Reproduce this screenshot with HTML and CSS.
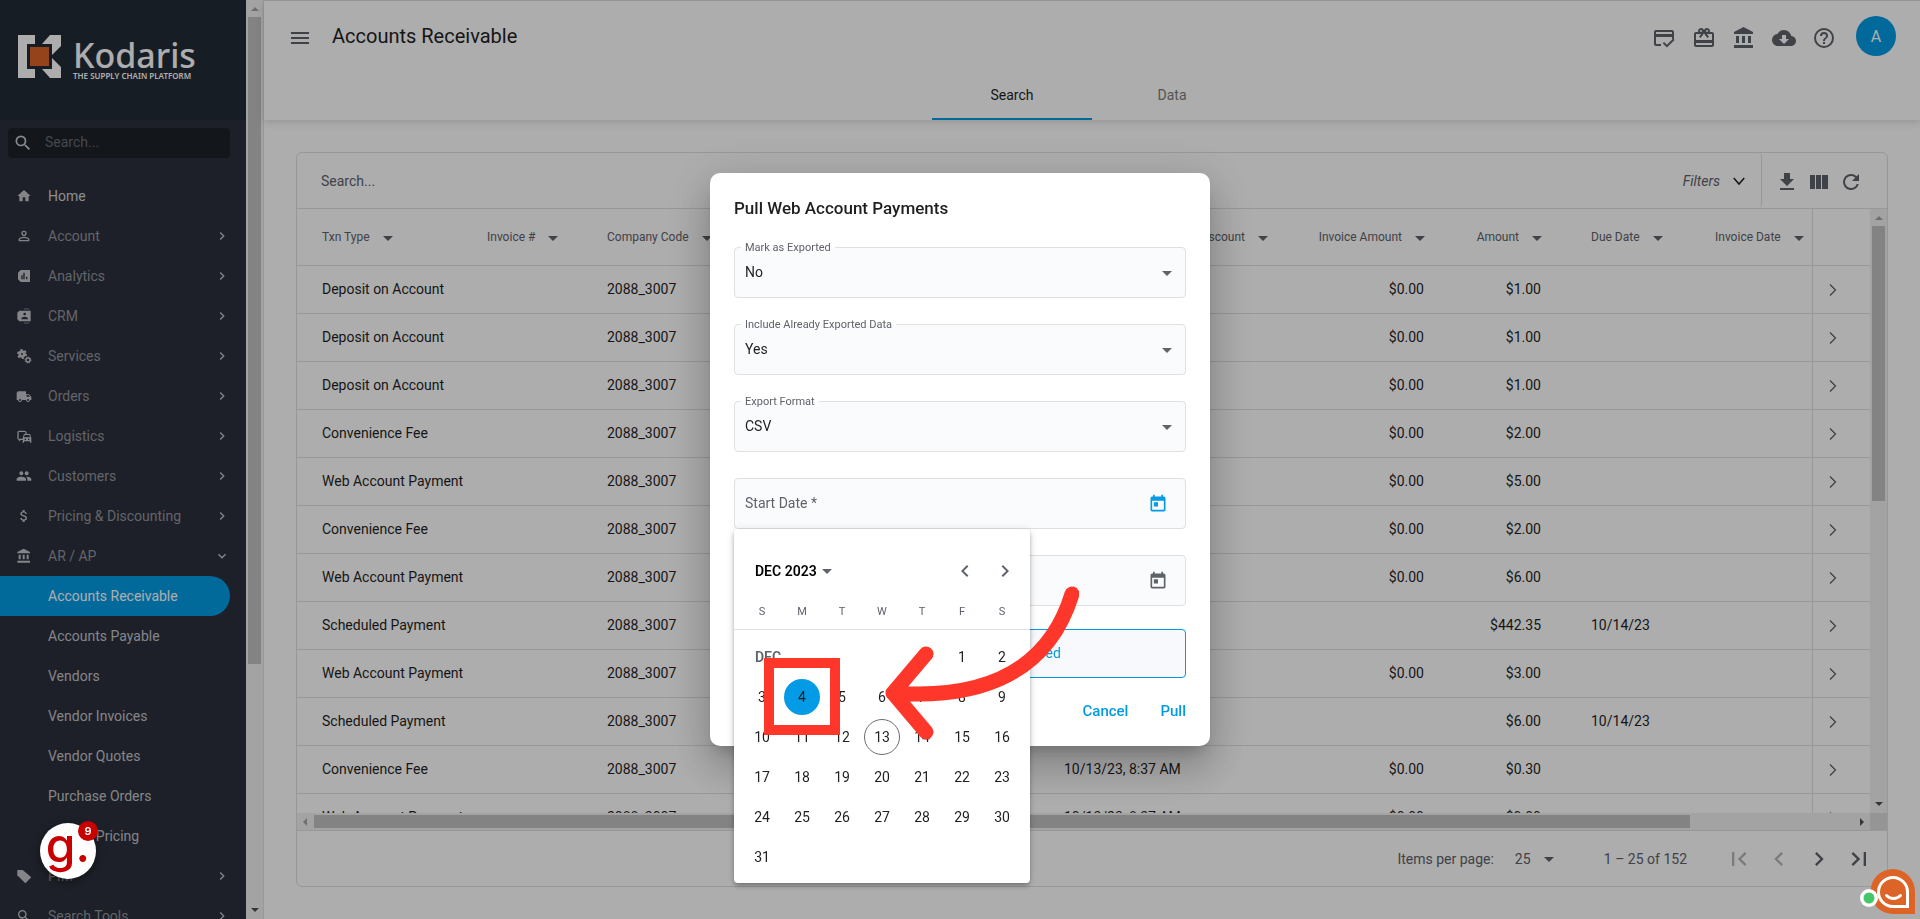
FILE: index.html
```html
<!DOCTYPE html>
<html lang="en">
<head>
    <meta charset="UTF-8">
    <meta name="viewport" content="width=device-width, initial-scale=1.0">
    <title>Accounts Receivable</title>
    <link rel="stylesheet" href="styles.css">
</head>
<body>
    <!-- shared icons -->
    <svg class="sprite" width="0" height="0" aria-hidden="true">
        <symbol id="chev-right" viewBox="0 0 24 24"><path d="M10 6 8.600 7.400 13.200 12l-4.600 4.600L10 18l6-6z"/></symbol>
        <symbol id="chev-left" viewBox="0 0 24 24"><path d="M15.400 7.400 14 6l-6 6 6 6 1.400-1.400L10.800 12z"/></symbol>
        <symbol id="chev-down" viewBox="0 0 24 24"><path d="M16.600 8.600 12 13.200 7.400 8.600 6 10l6 6 6-6z"/></symbol>
        <symbol id="thin-right" viewBox="0 0 24 24"><path d="M9 6.500 14.500 12 9 17.500" fill="none" stroke="currentColor" stroke-width="1.300"/></symbol>
        <symbol id="caret" viewBox="0 0 24 24"><path d="M7 10l5 5 5-5z"/></symbol>
        <symbol id="search" viewBox="0 0 24 24"><path d="M15.500 14h-.79l-.28-.27A6.470 6.470 0 0 0 16 9.500 6.500 6.500 0 1 0 9.500 16c1.610 0 3.090-.59 4.230-1.570l.27.28v.79l5 4.990L20.490 19l-4.990-5zm-6 0C7.010 14 5 11.990 5 9.500S7.010 5 9.500 5 14 7.010 14 9.500 11.990 14 9.500 14z"/></symbol>
        <symbol id="bank" viewBox="0 0 24 24"><path d="M4 10v7h3v-7H4zm6 0v7h3v-7h-3zM2 22h19v-3H2v3zm14-12v7h3v-7h-3zM11.500 1 2 6v2h19V6l-9.500-5z"/></symbol>
        <symbol id="today" viewBox="0 0 24 24"><path d="M19 3h-1V1h-2v2H8V1H6v2H5c-1.110 0-1.990.9-1.990 2L3 19c0 1.100.89 2 2 2h14c1.100 0 2-.9 2-2V5c0-1.100-.9-2-2-2zm0 16H5V8h14v11zM7 10h5v5H7z"/></symbol>
    </svg>

    <div class="app">
        <aside class="sidebar">
            <div class="brand">
                <svg class="brand-mark" viewBox="0 0 43 43" width="43" height="43">
                    <path d="M0 0h17v9H9v25h8v9H0z" fill="#fff"/>
                    <path d="M24 9 32 0h11v11l-9 9v-11zM24 34h10V23l9 9v11H32z" fill="#fff"/>
                    <path d="M12 12h19v19H12z" fill="#dc6428"/>
                </svg>
                <div class="brand-text">
                    <span class="brand-name">Kodaris</span>
                    <span class="brand-tag">THE SUPPLY CHAIN PLATFORM</span>
                </div>
            </div>
            <label class="side-search">
                <svg><use href="#search"/></svg>
                <input type="text" placeholder="Search..." aria-label="Search menu">
            </label>
            <nav class="menu">
                <a href="#" class="home"><svg class="ico" viewBox="0 0 24 24"><path d="M10 20v-6h4v6h5v-8h3L12 3 2 12h3v8z"/></svg>Home</a>
                <a href="#"><svg class="ico" viewBox="0 0 24 24"><path d="M12 5.900a2.100 2.100 0 1 1 0 4.200 2.100 2.100 0 0 1 0-4.200m0 9c2.970 0 6.100 1.460 6.100 2.100v1.100H5.900V17c0-.64 3.130-2.100 6.100-2.100M12 4a4 4 0 1 0 0 8 4 4 0 0 0 0-8zm0 9c-2.670 0-8 1.340-8 4v3h16v-3c0-2.660-5.330-4-8-4z"/></svg>Account<svg class="arrow"><use href="#chev-right"/></svg></a>
                <a href="#"><svg class="ico" viewBox="0 0 24 24"><path fill-rule="evenodd" d="M7 3h14v18H7l-4-4V7zM8 11v6h2v-6zm3-4v10h2V7zm4 6v4h2v-4z"/></svg>Analytics<svg class="arrow"><use href="#chev-right"/></svg></a>
                <a href="#"><svg class="ico" viewBox="0 0 24 24"><path fill-rule="evenodd" d="M12 1h8v1h-8zM12 22h8v1h-8zM5 4h17v16H5l-3-3V7zm8 3a2 2 0 1 0 0 4 2 2 0 0 0 0-4zm-5 9v1h10v-1c0-2-3-3-5-3s-5 1-5 3z"/></svg>CRM<svg class="arrow"><use href="#chev-right"/></svg></a>
                <a href="#"><svg class="ico" viewBox="0 0 24 24"><g fill="none" stroke="currentColor"><circle cx="9" cy="9" r="3.500" stroke-width="4"/><circle cx="9" cy="9" r="6" stroke-width="3" stroke-dasharray="3.100 3.180"/><circle cx="18" cy="18" r="3" stroke-width="2"/><circle cx="18" cy="18" r="4.500" stroke-width="1.500" stroke-dasharray="1.800 1.730"/></g></svg>Services<svg class="arrow"><use href="#chev-right"/></svg></a>
                <a href="#"><svg class="ico" viewBox="0 0 24 24"><path fill-rule="evenodd" d="M3 5h12v4h4l4 4v5h-2a3 3 0 0 1-6 0H9a3 3 0 0 1-6 0H1V7zm13 5v3h5l-2.500-3zM6 16.500a1.500 1.500 0 1 0 0 3 1.500 1.500 0 0 0 0-3zm12 0a1.500 1.500 0 1 0 0 3 1.500 1.500 0 0 0 0-3z"/></svg>Orders<svg class="arrow"><use href="#chev-right"/></svg></a>
                <a href="#"><svg class="ico" viewBox="0 0 24 24"><path d="M12 4H5C3.340 4 2 5.340 2 7v8c0 1.660 1.340 3 3 3l-1 1v1h1l2-2h4v-2H4V6h10v3h2V7c0-1.660-1.340-3-4-3z"/><path fill-rule="evenodd" d="M12 9h9l2 6v7h-2v-2h-9v2h-2v-7zm1 1.500L12 14h9l-1-3.500zM13 16v2h2v-2zm5 0v2h2v-2z"/></svg>Logistics<svg class="arrow"><use href="#chev-right"/></svg></a>
                <a href="#"><svg class="ico" viewBox="0 0 24 24"><path d="M16 11a3 3 0 1 0 0-6 3 3 0 0 0 0 6zm-8 0a3 3 0 1 0 0-6 3 3 0 0 0 0 6zm0 2c-2.330 0-7 1.170-7 3.500V19h14v-2.500C15 14.170 10.330 13 8 13zm8 0-.97.050c1.160.84 1.970 1.970 1.970 3.450V19h6v-2.500c0-2.330-4.670-3.500-7-3.500z"/></svg>Customers<svg class="arrow"><use href="#chev-right"/></svg></a>
                <a href="#"><svg class="ico" viewBox="0 0 24 24"><path d="M11.800 10.900c-2.270-.59-3-1.200-3-2.150 0-1.090 1.010-1.850 2.700-1.850 1.780 0 2.440.85 2.500 2.100h2.210c-.07-1.720-1.120-3.300-3.210-3.810V3h-3v2.160c-1.940.42-3.500 1.680-3.500 3.610 0 2.310 1.910 3.460 4.700 4.130 2.500.6 3 1.480 3 2.410 0 .69-.49 1.790-2.700 1.790-2.060 0-2.870-.92-2.980-2.100h-2.200c.12 2.190 1.760 3.420 3.680 3.830V21h3v-2.150c1.950-.37 3.500-1.500 3.500-3.550 0-2.840-2.430-3.810-4.700-4.400z"/></svg>Pricing &amp; Discounting<svg class="arrow"><use href="#chev-right"/></svg></a>
                <a href="#"><svg class="ico"><use href="#bank"/></svg>AR / AP<svg class="arrow"><use href="#chev-down"/></svg></a>
                <a href="#" class="sub active">Accounts Receivable</a>
                <a href="#" class="sub">Accounts Payable</a>
                <a href="#" class="sub">Vendors</a>
                <a href="#" class="sub">Vendor Invoices</a>
                <a href="#" class="sub">Vendor Quotes</a>
                <a href="#" class="sub">Purchase Orders</a>
                <a href="#" class="sub">Vendor Pricing</a>
                <a href="#"><svg class="ico" viewBox="0 0 24 24"><path d="M2 3h8l13 11-9 9L2 11z"/></svg>PIM<svg class="arrow"><use href="#chev-right"/></svg></a>
                <a href="#"><svg class="ico"><use href="#search"/></svg>Search Tools<svg class="arrow"><use href="#chev-right"/></svg></a>
            </nav>
        </aside>
        <div class="scroll-v side-scroll">
            <i class="tri up off"></i>
            <div class="thumb"></div>
            <i class="tri down"></i>
        </div>

        <div class="page">
            <header class="topbar">
                <div class="top-row">
                    <button class="icon-btn" aria-label="Menu"><svg viewBox="0 0 24 24"><path d="M3 18h18v-2H3v2zm0-5h18v-2H3v2zm0-7v2h18V6H3z"/></svg></button>
                    <h1>Accounts Receivable</h1>
                    <div class="top-icons">
                        <button class="icon-btn" aria-label="Payments"><svg viewBox="0 0 24 24"><path fill-rule="evenodd" d="M4 4h16c1.100 0 2 .9 2 2v7h-2v-2H4v7h5v2H4c-1.100 0-2-.9-2-2V6c0-1.100.9-2 2-2zm0 2v2h16V6z"/><path d="m14.900 21.500-4.200-4.200 1.400-1.400 2.800 2.800 6.300-6.200 1.400 1.400z"/></svg></button>
                        <button class="icon-btn" aria-label="Gift cards"><svg viewBox="0 0 24 24"><path d="M20 6h-2.180c.11-.31.180-.65.180-1a3 3 0 0 0-5.500-1.650l-.5.670-.5-.68A3 3 0 0 0 6 5c0 .35.070.69.180 1H4c-1.110 0-1.990.89-1.990 2L2 19c0 1.110.89 2 2 2h16c1.110 0 2-.89 2-2V8c0-1.110-.89-2-2-2zm-5-2a1 1 0 1 1 0 2 1 1 0 0 1 0-2zM9 4a1 1 0 1 1 0 2 1 1 0 0 1 0-2zm11 15H4v-2h16v2zm0-5H4V8h5.080L7 10.830 8.620 12 12 7.400l3.380 4.600L17 10.830 14.920 8H20v6z"/></svg></button>
                        <button class="icon-btn" aria-label="Bank"><svg><use href="#bank"/></svg></button>
                        <button class="icon-btn" aria-label="Downloads"><svg viewBox="0 0 24 24"><path d="M19.350 10.040A7.490 7.490 0 0 0 12 4C9.110 4 6.600 5.640 5.350 8.040A5.994 5.994 0 0 0 0 14c0 3.310 2.690 6 6 6h13c2.760 0 5-2.240 5-5 0-2.640-2.050-4.780-4.650-4.960zM17 13l-5 5-5-5h3V9h4v4h3z"/></svg></button>
                        <button class="icon-btn" aria-label="Help"><svg viewBox="0 0 24 24"><path d="M11 18h2v-2h-2v2zm1-16a10 10 0 1 0 0 20 10 10 0 0 0 0-20zm0 18a8 8 0 1 1 0-16 8 8 0 0 1 0 16zm0-14a4 4 0 0 0-4 4h2a2 2 0 1 1 4 0c0 2-3 1.750-3 5h2c0-2.250 3-2.500 3-5a4 4 0 0 0-4-4z"/></svg></button>
                        <button class="avatar">A</button>
                    </div>
                </div>
                <nav class="tabs">
                    <a href="#" class="tab selected">Search</a>
                    <a href="#" class="tab">Data</a>
                </nav>
            </header>

            <main class="card">
                <div class="toolbar">
                    <input type="text" placeholder="Search..." aria-label="Search transactions">
                    <button class="filters">Filters <svg viewBox="0 0 24 24"><path d="M5 8l7 8 7-8" fill="none" stroke="#1e1e1e" stroke-width="2"/></svg></button>
                    <div class="tools">
                        <button aria-label="Download"><svg viewBox="0 0 24 24"><path d="M19 9h-4V3H9v6H5l7 7 7-7zM5 18v2h14v-2H5z"/></svg></button>
                        <button aria-label="Columns"><svg viewBox="0 0 24 24"><path d="M3 5h5v14H3zM9 5h5v14H9zM15 5h6v14h-6z"/></svg></button>
                        <button aria-label="Refresh"><svg viewBox="0 0 24 24"><path d="M17.650 6.350A7.958 7.958 0 0 0 12 4a8 8 0 1 0 7.730 10h-2.080A5.990 5.990 0 0 1 12 18a6 6 0 1 1 0-12c1.660 0 3.140.69 4.220 1.780L13 11h7V4l-2.350 2.350z"/></svg></button>
                    </div>
                </div>
                <div class="grid">
                    <div class="grid-body">
                        <table>
                            <colgroup>
                                <col class="w-type"><col class="w-inv"><col><col class="w-date"><col class="w-disc"><col class="w-invamt"><col class="w-amt"><col class="w-due"><col class="w-invdate"><col class="w-act">
                            </colgroup>
                            <thead>
                                <tr>
                                    <th>Txn Type<svg><use href="#caret"/></svg></th>
                                    <th>Invoice #<svg><use href="#caret"/></svg></th>
                                    <th>Company Code<svg><use href="#caret"/></svg></th>
                                    <th></th>
                                    <th class="num">Discount<svg><use href="#caret"/></svg></th>
                                    <th class="num">Invoice Amount<svg><use href="#caret"/></svg></th>
                                    <th class="num">Amount<svg><use href="#caret"/></svg></th>
                                    <th>Due Date<svg><use href="#caret"/></svg></th>
                                    <th>Invoice Date<svg><use href="#caret"/></svg></th>
                                    <th class="act"></th>
                                </tr>
                            </thead>
                            <tbody>
                                <tr><td>Deposit on Account</td><td></td><td>2088_3007</td><td></td><td></td><td class="num">$0.00</td><td class="num">$1.00</td><td></td><td></td><td class="act"><svg><use href="#thin-right"/></svg></td></tr>
                                <tr><td>Deposit on Account</td><td></td><td>2088_3007</td><td></td><td></td><td class="num">$0.00</td><td class="num">$1.00</td><td></td><td></td><td class="act"><svg><use href="#thin-right"/></svg></td></tr>
                                <tr><td>Deposit on Account</td><td></td><td>2088_3007</td><td></td><td></td><td class="num">$0.00</td><td class="num">$1.00</td><td></td><td></td><td class="act"><svg><use href="#thin-right"/></svg></td></tr>
                                <tr><td>Convenience Fee</td><td></td><td>2088_3007</td><td></td><td></td><td class="num">$0.00</td><td class="num">$2.00</td><td></td><td></td><td class="act"><svg><use href="#thin-right"/></svg></td></tr>
                                <tr><td>Web Account Payment</td><td></td><td>2088_3007</td><td></td><td></td><td class="num">$0.00</td><td class="num">$5.00</td><td></td><td></td><td class="act"><svg><use href="#thin-right"/></svg></td></tr>
                                <tr><td>Convenience Fee</td><td></td><td>2088_3007</td><td></td><td></td><td class="num">$0.00</td><td class="num">$2.00</td><td></td><td></td><td class="act"><svg><use href="#thin-right"/></svg></td></tr>
                                <tr><td>Web Account Payment</td><td></td><td>2088_3007</td><td></td><td></td><td class="num">$0.00</td><td class="num">$6.00</td><td></td><td></td><td class="act"><svg><use href="#thin-right"/></svg></td></tr>
                                <tr><td>Scheduled Payment</td><td></td><td>2088_3007</td><td></td><td></td><td></td><td class="num">$442.35</td><td>10/14/23</td><td></td><td class="act"><svg><use href="#thin-right"/></svg></td></tr>
                                <tr><td>Web Account Payment</td><td></td><td>2088_3007</td><td></td><td></td><td class="num">$0.00</td><td class="num">$3.00</td><td></td><td></td><td class="act"><svg><use href="#thin-right"/></svg></td></tr>
                                <tr><td>Scheduled Payment</td><td></td><td>2088_3007</td><td></td><td></td><td></td><td class="num">$6.00</td><td>10/14/23</td><td></td><td class="act"><svg><use href="#thin-right"/></svg></td></tr>
                                <tr><td>Convenience Fee</td><td></td><td>2088_3007</td><td>10/13/23, 8:37 AM</td><td></td><td class="num">$0.00</td><td class="num">$0.30</td><td></td><td></td><td class="act"><svg><use href="#thin-right"/></svg></td></tr>
                                <tr><td>Web Account Payment</td><td></td><td>2088_3007</td><td>10/13/23, 8:37 AM</td><td></td><td class="num">$0.00</td><td class="num">$9.00</td><td></td><td></td><td class="act"><svg><use href="#thin-right"/></svg></td></tr>
                            </tbody>
                        </table>
                    </div>
                    <div class="scroll-v grid-scroll">
                        <i class="tri up off"></i>
                        <div class="thumb"></div>
                        <i class="tri down"></i>
                    </div>
                    <div class="scroll-h">
                        <i class="tri left off"></i>
                        <div class="thumb"></div>
                        <i class="tri right"></i>
                    </div>
                    <div class="corner"></div>
                </div>
                <footer class="pager">
                    <label for="page-size">Items per page:</label>
                    <span class="size-select"><select id="page-size"><option>25</option></select><svg><use href="#caret"/></svg></span>
                    <span class="range">1 – 25 of 152</span>
                    <div class="pager-btns">
                        <button disabled aria-label="First page"><svg viewBox="0 0 24 24"><path d="M18.410 16.590 13.820 12l4.590-4.590L17 6l-6 6 6 6zM6 6h2v12H6z"/></svg></button>
                        <button disabled aria-label="Previous page"><svg><use href="#chev-left"/></svg></button>
                        <button aria-label="Next page"><svg><use href="#chev-right"/></svg></button>
                        <button aria-label="Last page"><svg viewBox="0 0 24 24"><path d="M5.590 7.410 10.180 12l-4.590 4.590L7 18l6-6-6-6zM16 6h2v12h-2z"/></svg></button>
                    </div>
                </footer>
            </main>
        </div>
    </div>

    <div class="backdrop">
        <section class="dialog" role="dialog" aria-labelledby="dialog-title">
            <h2 id="dialog-title">Pull Web Account Payments</h2>
            <div class="field">
                <label for="mark">Mark as Exported</label>
                <select id="mark"><option>No</option></select>
                <svg class="field-caret"><use href="#caret"/></svg>
            </div>
            <div class="field">
                <label for="include">Include Already Exported Data</label>
                <select id="include"><option>Yes</option></select>
                <svg class="field-caret"><use href="#caret"/></svg>
            </div>
            <div class="field">
                <label for="format">Export Format</label>
                <select id="format"><option>CSV</option></select>
                <svg class="field-caret"><use href="#caret"/></svg>
            </div>
            <div class="field date open">
                <input type="text" placeholder="Start Date *" aria-label="Start date">
                <button aria-label="Open calendar"><svg><use href="#today"/></svg></button>

                <div class="picker">
                    <div class="picker-head">
                        <button class="period">DEC 2023<svg><use href="#caret"/></svg></button>
                        <button class="step" aria-label="Previous month"><svg><use href="#chev-left"/></svg></button>
                        <button class="step" aria-label="Next month"><svg><use href="#chev-right"/></svg></button>
                    </div>
                    <table class="days">
                        <colgroup>
                            <col class="edge"><col span="5"><col class="edge">
                        </colgroup>
                        <thead>
                            <tr><th>S</th><th>M</th><th>T</th><th>W</th><th>T</th><th>F</th><th>S</th></tr>
                        </thead>
                        <tbody>
                            <tr><td colspan="5" class="month">DEC</td><td><button>1</button></td><td><button>2</button></td></tr>
                            <tr><td><button>3</button></td><td><button class="picked">4</button></td><td><button>5</button></td><td><button>6</button></td><td><button>7</button></td><td><button>8</button></td><td><button>9</button></td></tr>
                            <tr><td><button>10</button></td><td><button>11</button></td><td><button>12</button></td><td><button class="now">13</button></td><td><button>14</button></td><td><button>15</button></td><td><button>16</button></td></tr>
                            <tr><td><button>17</button></td><td><button>18</button></td><td><button>19</button></td><td><button>20</button></td><td><button>21</button></td><td><button>22</button></td><td><button>23</button></td></tr>
                            <tr><td><button>24</button></td><td><button>25</button></td><td><button>26</button></td><td><button>27</button></td><td><button>28</button></td><td><button>29</button></td><td><button>30</button></td></tr>
                            <tr><td><button>31</button></td><td colspan="6"></td></tr>
                        </tbody>
                    </table>
                    <div class="highlight"></div>
                    <svg class="pointer" viewBox="0 0 200 160" width="200" height="160">
                        <path d="M193 12C170 88 106 118 14 111M47 72 14 111 47 150" fill="none" stroke="#ff372a" stroke-width="15" stroke-linecap="round" stroke-linejoin="round"/>
                    </svg>
                </div>
            </div>
            <div class="field date">
                <input type="text" aria-label="End date">
                <button aria-label="Open calendar"><svg><use href="#today"/></svg></button>
            </div>
            <button class="notice">Date range required</button>
            <div class="actions">
                <button>Cancel</button>
                <button>Pull</button>
            </div>
        </section>
    </div>

    <button class="guide" aria-label="Guides">g.<span class="count">9</span></button>

    <button class="chat" aria-label="Chat">
        <svg viewBox="0 0 56 46" width="56" height="46">
            <path d="M33 0a22.500 22.500 0 0 0 0 45h22V22.500A22.500 22.500 0 0 0 33 0z" fill="#dd6427"/>
            <path d="M33 8.500a14.500 14.500 0 0 0 0 29h14.500V23A14.500 14.500 0 0 0 33 8.500z" fill="none" stroke="#fff" stroke-width="3"/>
            <path d="M26.500 26.500c4 4 10 4 14 0" fill="none" stroke="#fff" stroke-width="3" stroke-linecap="round"/>
            <circle cx="9" cy="29" r="9" fill="#fff"/>
            <circle cx="9" cy="29" r="5.500" fill="#45c869"/>
        </svg>
    </button>
</body>
</html>
```
FILE: styles.css
```css
* {
    box-sizing: border-box;
}

body {
    margin: 0;
    height: 100vh;
    overflow: hidden;
    font-family: Roboto, "Open Sans", sans-serif;
    font-size: 14px;
    color: #1f1f1f;
    background-color: #fff;
}

button, input, select {
    font: inherit;
    color: inherit;
    border: none;
    background: none;
    padding: 0;
    margin: 0;
    outline: none;
}

button {
    cursor: pointer;
}

select {
    appearance: none;
}

a {
    color: inherit;
    text-decoration: none;
}

svg {
    display: block;
    width: 24px;
    height: 24px;
    fill: currentColor;
    flex-shrink: 0;
}

.sprite {
    position: absolute;
    width: 0;
    height: 0;
}

.app {
    display: flex;
    height: 100vh;
}

/* sidebar */
.sidebar {
    width: 246px;
    flex-shrink: 0;
    overflow: hidden;
    background-color: #2c303b;
}

.brand {
    display: flex;
    align-items: center;
    gap: 12px;
    height: 120px;
    padding: 0 18px 8px;
    background-color: #232b36;
    color: #fff;
}

.brand-mark {
    width: 43px;
    height: 43px;
}

.brand-text {
    display: flex;
    flex-direction: column;
    margin-top: 5px;
    font-family: "Noto Sans", sans-serif;
}

.brand-name {
    font-size: 34px;
    line-height: 34px;
    font-weight: 500;
}

.brand-tag {
    font-size: 8px;
    line-height: 8px;
    font-weight: 600;
    white-space: nowrap;
}

.side-search {
    display: flex;
    align-items: center;
    height: 30px;
    margin: 8px 16px 18px 8px;
    padding-left: 5px;
    border-radius: 4px;
    background-color: #1d2128;
    color: #c9cbd0;
}

.side-search svg {
    width: 20px;
    height: 20px;
}

.side-search input {
    flex: 1;
    min-width: 0;
    padding: 0 0 2px 12px;
}

.side-search input::placeholder {
    color: #666b73;
    opacity: 1;
}

.menu a {
    display: flex;
    align-items: center;
    height: 40px;
    padding: 0 16px;
    color: #92959b;
}

.menu .home {
    color: #cfd1d5;
}

.menu .ico {
    width: 16px;
    height: 16px;
    margin-right: 16px;
    color: #c3c5ca;
}

.menu .arrow {
    width: 16px;
    height: 16px;
    margin-left: auto;
    color: #c3c5ca;
}

.menu .sub {
    padding-left: 48px;
    color: #c3c5ca;
}

.menu .active {
    margin-right: 16px;
    border-radius: 0 20px 20px 0;
    background-color: #039be5;
    color: #fff;
}

/* scrollbars */
.scroll-v {
    display: flex;
    flex-direction: column;
    align-items: center;
    width: 17px;
    flex-shrink: 0;
    background-color: #f1f1f1;
}

.scroll-v .thumb {
    width: 13px;
    background-color: #c1c1c1;
}

.scroll-h {
    display: flex;
    align-items: center;
    height: 17px;
    background-color: #f1f1f1;
}

.scroll-h .thumb {
    width: 87.5%;
    height: 13px;
    background-color: #c1c1c1;
}

.side-scroll .thumb {
    height: 70.4%;
}

.grid-scroll .thumb {
    height: 45.5%;
}

.tri {
    border: 4px solid transparent;
}

.up {
    border-top-width: 0;
    border-bottom-color: #505050;
    margin: 7px 0 6px;
}

.down {
    border-bottom-width: 0;
    border-top-color: #505050;
    margin: auto 0 7px;
}

.left {
    border-left-width: 0;
    border-right-color: #505050;
    margin: 0 7px 0 6px;
}

.right {
    border-right-width: 0;
    border-left-color: #505050;
    margin: 0 6px 0 auto;
}

.up.off {
    border-bottom-color: #a3a3a3;
}

.left.off {
    border-right-color: #a3a3a3;
}

/* page */
.page {
    display: flex;
    flex-direction: column;
    flex: 1;
    min-width: 0;
    border-left: 1px solid #e0e0e0;
    border-top: 1px solid #e4e4e4;
}

.topbar {
    display: flex;
    flex-direction: column;
    justify-content: space-between;
    height: 119px;
    box-shadow: 0 2px 8px rgba(0, 0, 0, 0.15);
}

.top-row {
    display: flex;
    align-items: center;
    height: 70px;
    padding: 0 24px;
}

.icon-btn {
    color: #5e6269;
    padding-top: 4px;
}

.top-row h1 {
    margin: 0 0 0 20px;
    font-size: 20px;
    font-weight: 400;
}

.top-icons {
    display: flex;
    align-items: center;
    gap: 16px;
    margin-left: auto;
}

.avatar {
    width: 40px;
    height: 40px;
    margin-left: 4px;
    border-radius: 50%;
    background-color: #039be5;
    color: #fff;
    font-size: 16px;
}

.tabs {
    display: flex;
    justify-content: center;
}

.tab {
    width: 160px;
    padding-bottom: 14px;
    border-bottom: 2px solid transparent;
    line-height: 18px;
    text-align: center;
    color: #7c7c7c;
}

.tab.selected {
    color: #1f1f1f;
    border-bottom-color: #039be5;
}

.card {
    display: flex;
    flex-direction: column;
    flex: 1;
    min-height: 0;
    margin: 32px;
    border: 1px solid #e0e0e0;
    border-radius: 6px;
}

.toolbar {
    display: flex;
    align-items: center;
    height: 56px;
    padding-left: 24px;
    border-bottom: 1px solid #e0e0e0;
    color: #5e6269;
}

.toolbar input {
    flex: 1;
}

.toolbar input::placeholder {
    color: #5e6269;
    opacity: 1;
}

.filters {
    display: flex;
    align-items: center;
    gap: 10px;
    height: 100%;
    padding-right: 13px;
    border-right: 1px solid #e0e0e0;
    border-radius: 0 4px 4px 0;
    font-style: italic;
}

.filters svg {
    width: 18px;
    height: 18px;
}

.tools {
    display: flex;
    gap: 8px;
    padding: 2px 24px 0 13px;
}

/* table */
.grid {
    display: grid;
    grid-template-columns: 1fr 17px;
    grid-template-rows: 1fr 17px;
    flex: 1;
    min-height: 0;
}

.grid-body {
    min-height: 0;
    overflow: hidden;
}

.corner {
    background-color: #dcdcdc;
}

.grid table {
    width: 100%;
    table-layout: fixed;
    border-collapse: separate;
    border-spacing: 0;
}

.w-type { width: 181px; }
.w-inv { width: 120px; }
.w-date { width: 132px; }
.w-disc { width: 121px; }
.w-invamt { width: 157px; }
.w-amt { width: 117px; }
.w-due { width: 124px; }
.w-invdate { width: 106px; }
.w-act { width: 58px; }

.grid th,
.grid td {
    height: 48px;
    padding: 0 41px 2px 9px;
    border-bottom: 1px solid #e0e0e0;
    text-align: left;
    white-space: nowrap;
}

.grid th {
    height: 57px;
    padding: 2px 0 0 9px;
    font-size: 12px;
    font-weight: 400;
    color: #5e6269;
}

.grid th:first-child,
.grid td:first-child {
    padding-left: 25px;
    padding-right: 0;
}

.grid td:nth-child(4) {
    padding-right: 0;
}

.grid th svg {
    display: inline-block;
    vertical-align: middle;
    margin-left: 6px;
}

.grid .num {
    text-align: right;
}

.grid th.num {
    padding: 2px 33px 0 0;
}

.grid th.act,
.grid td.act {
    padding: 0 0 0 8px;
    border-left: 1px solid #e0e0e0;
    color: #5e6269;
}

/* paginator */
.pager {
    display: flex;
    align-items: center;
    justify-content: flex-end;
    height: 56px;
    padding-right: 8px;
    border-top: 1px solid #e0e0e0;
    color: #5e6269;
}

.size-select {
    display: flex;
    align-items: center;
    margin: 0 43px 0 21px;
}

.size-select select {
    width: 22px;
}

.range {
    margin-right: 32px;
}

.pager-btns {
    display: flex;
}

.pager-btns button {
    display: flex;
    align-items: center;
    justify-content: center;
    width: 40px;
    height: 40px;
}

.pager-btns button:disabled {
    color: #b5b6b9;
}

.pager-btns svg {
    width: 28px;
    height: 28px;
}

/* dialog */
.backdrop {
    position: fixed;
    inset: 0;
    display: flex;
    align-items: center;
    justify-content: center;
    background-color: rgba(0, 0, 0, 0.32);
}

.dialog {
    width: 500px;
    padding: 24px 24px 26px;
    border-radius: 10px;
    background-color: #fff;
    box-shadow: 0 11px 15px -7px rgba(0, 0, 0, 0.2), 0 24px 38px 3px rgba(0, 0, 0, 0.14), 0 9px 46px 8px rgba(0, 0, 0, 0.12);
}

.dialog h2 {
    margin: 0 0 28px;
    font-size: 17px;
    line-height: 22px;
    font-weight: 500;
}

.field {
    position: relative;
    display: flex;
    align-items: center;
    height: 51px;
    margin-bottom: 26px;
    border: 1px solid #e0e0e0;
    border-radius: 4px;
    background-color: #fafbfd;
}

.field label {
    position: absolute;
    top: -6px;
    left: 6px;
    padding: 0 4px;
    font-size: 11px;
    line-height: 12px;
    color: #5e6269;
    background: linear-gradient(#fff 50%, #fafbfd 50%);
}

.field select,
.field input {
    flex: 1;
    min-width: 0;
    height: 48px;
    padding: 0 10px 2px;
}

.field input::placeholder {
    color: #5e6269;
    opacity: 1;
}

.field-caret {
    position: absolute;
    right: 6px;
    color: #5e6269;
    pointer-events: none;
}

.date button {
    color: #5e6269;
}

.date > button {
    margin-right: 17px;
}

.date > button svg {
    width: 20px;
    height: 20px;
}

.open > button {
    color: #039be5;
}

.notice {
    display: block;
    width: 100%;
    height: 49px;
    margin-top: -3px;
    padding: 0 0 2px 204px;
    border: 1px solid #039be5;
    border-radius: 4px;
    text-align: left;
    color: #039be5;
    background-color: #f7f9fc;
}

.actions {
    display: flex;
    justify-content: flex-end;
    gap: 32px;
    margin-top: 24px;
    line-height: 18px;
}

.actions button {
    font-size: 15px;
    font-weight: 500;
    color: #039be5;
}

/* date picker */
.picker {
    position: absolute;
    top: 50px;
    left: -1px;
    z-index: 1;
    width: 296px;
    padding-bottom: 6px;
    border-radius: 4px;
    background-color: #fff;
    box-shadow: 0 2px 4px -1px rgba(0, 0, 0, 0.2), 0 4px 5px rgba(0, 0, 0, 0.14), 0 1px 10px rgba(0, 0, 0, 0.12);
}

.picker-head {
    display: flex;
    align-items: center;
    padding: 22px 5px 6px 21px;
}

.period {
    display: flex;
    align-items: center;
    margin-right: auto;
    font-weight: 600;
}

.picker .period {
    color: #000;
}

.period svg {
    margin-left: -2px;
    color: #5e6269;
}

.step {
    display: flex;
    align-items: center;
    justify-content: center;
    width: 40px;
    height: 40px;
}

.days {
    width: 100%;
    table-layout: fixed;
    border-collapse: separate;
    border-spacing: 0;
}

.days .edge {
    width: 48px;
}

.days th {
    height: 33px;
    padding: 0 0 4px;
    border-bottom: 1px solid #e0e0e0;
    font-size: 11px;
    font-weight: 400;
    color: #5e6269;
}

.days td {
    height: 40px;
    padding: 0;
    text-align: center;
}

.days th:first-child,
.days td:first-child {
    padding-left: 8px;
}

.days th:last-child,
.days td:last-child {
    padding-right: 8px;
}

.days tbody tr:first-child td {
    height: 47px;
    padding-top: 7px;
}

.days td.month:first-child {
    padding-left: 21px;
    text-align: left;
    font-weight: 600;
    color: #5e6269;
}

.days button {
    width: 36px;
    height: 36px;
    border-radius: 50%;
    color: #1f1f1f;
}

.days .picked {
    background-color: #039be5;
}

.days .now {
    border: 1px solid #6b6d72;
}

.highlight {
    position: absolute;
    top: 129px;
    left: 30px;
    width: 76px;
    height: 77px;
    border: 10px solid #ff372a;
}

.pointer {
    position: absolute;
    top: 53px;
    left: 145px;
    width: 200px;
    height: 160px;
}

/* floating widgets */
.guide {
    position: fixed;
    left: 40px;
    bottom: 40px;
    width: 56px;
    height: 56px;
    padding-bottom: 12px;
    border-radius: 50%;
    background-color: #fff;
    color: #c90000;
    font-family: Inter, sans-serif;
    font-size: 48px;
    line-height: 44px;
    font-weight: 500;
    box-shadow: 0 2px 8px rgba(0, 0, 0, 0.5);
}

.count {
    position: absolute;
    top: -2px;
    right: -2px;
    width: 20px;
    height: 20px;
    border-radius: 50%;
    background-color: #c90000;
    color: #fff;
    font-size: 11px;
    line-height: 20px;
    font-weight: 600;
}

.chat {
    position: fixed;
    right: 4px;
    bottom: 4px;
}

.chat svg {
    width: 56px;
    height: 46px;
}
```
